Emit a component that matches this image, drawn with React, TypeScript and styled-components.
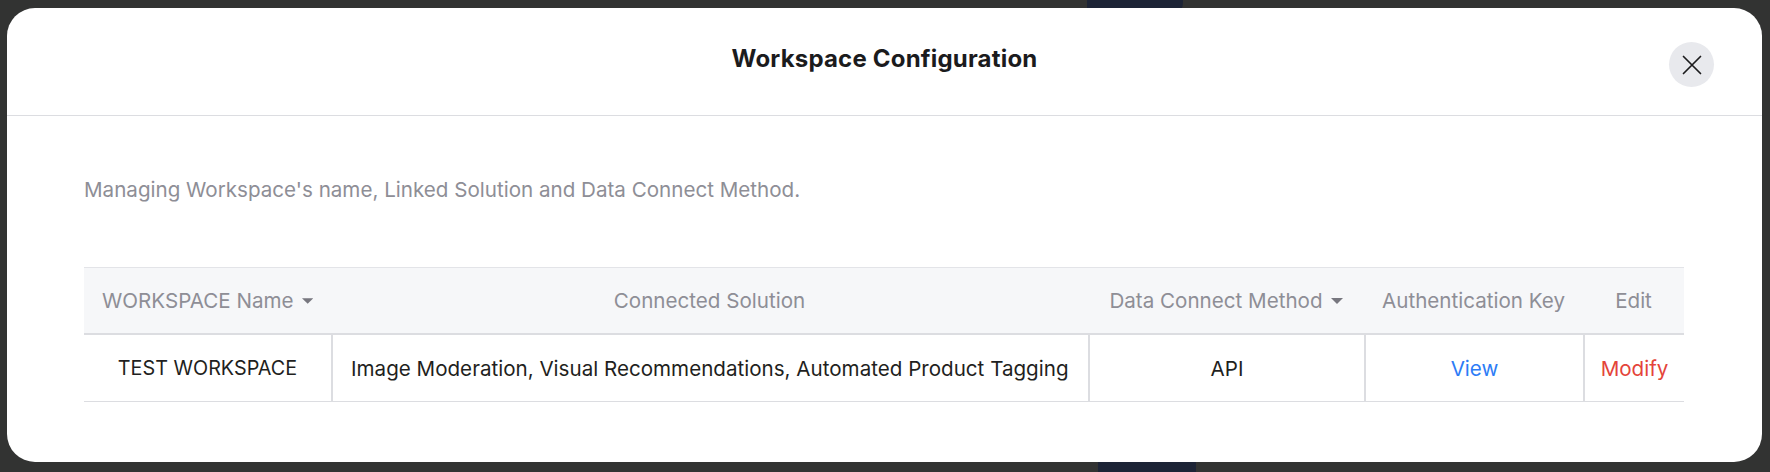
import styled, { createGlobalStyle } from "styled-components";

const GlobalStyle = createGlobalStyle`
  html, body {
    margin: 0;
    padding: 0;
    background: #323332;
  }
  * {
    box-sizing: border-box;
  }
`;

const Backdrop = styled.div`
  position: relative;
  width: 1770px;
  height: 472px;
  overflow: hidden;
  background: #323332;
  padding: 8px 0 0 7px;
  font-family: "Inter", "Noto Sans", sans-serif;
`;

// bits of the page behind the overlay
const BehindShape = styled.div<{ $top?: boolean }>`
  position: absolute;
  background: #1d2436;
  ${(p) =>
    p.$top
      ? `left: 1087px; top: -40px; width: 96px; height: 60px; border-radius: 0 0 18px 0;`
      : `left: 1098px; top: 452px; width: 98px; height: 60px; border-radius: 0 0 40px 40px;`}
`;

const Modal = styled.div`
  position: relative;
  width: 1755px;
  height: 454px;
  background: #ffffff;
  border-radius: 28px;
  display: flex;
  flex-direction: column;
`;

const Header = styled.header`
  height: 108px;
  flex-shrink: 0;
  display: flex;
  align-items: center;
  justify-content: center;
  border-bottom: 1px solid #dcdde1;
  padding-bottom: 6px;
  position: relative;
`;

const Title = styled.h1`
  margin: 0;
  font-size: 24px;
  font-weight: 700;
  color: #1b1b1d;
  letter-spacing: 0.2px;
`;

const CloseButton = styled.button`
  position: absolute;
  right: 48px;
  top: 34px;
  width: 45px;
  height: 45px;
  border-radius: 50%;
  border: none;
  background: #e8e9ed;
  display: flex;
  align-items: center;
  justify-content: center;
  padding: 0;
  cursor: pointer;
`;

const Body = styled.div`
  padding: 0 78px 0 77px;
  display: flex;
  flex-direction: column;
`;

const Description = styled.p`
  margin: 62px 0 0;
  height: 24px;
  line-height: 24px;
  font-size: 20.6px;
  color: #8e8e96;
`;

const Table = styled.div`
  margin-top: 65px;
  display: grid;
  grid-template-columns: 247px 757px 276px 219px 101px;
  border-top: 1px solid #e3e4e8;
`;

const HeadCell = styled.div<{ $left?: boolean }>`
  height: 67px;
  background: #f6f7f9;
  border-bottom: 2px solid #dcdde1;
  display: flex;
  align-items: center;
  justify-content: ${(p) => (p.$left ? "flex-start" : "center")};
  padding: 0 18px;
  gap: 8px;
  font-size: 20.6px;
  color: #8e8e96;
  white-space: nowrap;
`;

const Cell = styled.div<{ $left?: boolean; $first?: boolean; $tone?: "link" | "danger" }>`
  height: 67px;
  border-bottom: 1px solid #dcdde1;
  border-left: ${(p) => (p.$first ? "none" : "2px solid #dcdde1")};
  display: flex;
  align-items: center;
  justify-content: ${(p) => (p.$left ? "flex-start" : "center")};
  padding: 0 18px;
  font-size: 20.6px;
  white-space: nowrap;
  color: ${(p) =>
    p.$tone === "link" ? "#2d7cf6" : p.$tone === "danger" ? "#e4443a" : "#1f1f21"};
  cursor: ${(p) => (p.$tone ? "pointer" : "default")};
`;

const FirstCell = styled(Cell)`
  font-size: 19.8px;
`;

const SortArrow = () => (
  <svg width="12" height="6" viewBox="0 0 12 6">
    <path d="M0 0h12L6 6z" fill="#77777f" />
  </svg>
);

const CloseIcon = () => (
  <svg width="20" height="20" viewBox="0 0 20 20">
    <path d="M1.5 1.5l17 17M18.5 1.5l-17 17" stroke="#1b1b1d" strokeWidth="1.7" strokeLinecap="round" />
  </svg>
);

const columns = [
  { label: "WORKSPACE Name", sort: true, left: true },
  { label: "Connected Solution" },
  { label: "Data Connect Method", sort: true },
  { label: "Authentication Key" },
  { label: "Edit" },
];

export default function App() {
  return (
    <>
      <GlobalStyle />
      <Backdrop>
        <BehindShape $top />
        <BehindShape />
        <Modal>
          <Header>
            <Title>Workspace Configuration</Title>
            <CloseButton aria-label="Close">
              <CloseIcon />
            </CloseButton>
          </Header>
          <Body>
            <Description>
              Managing Workspace's name, Linked Solution and Data Connect Method.
            </Description>
            <Table>
              {columns.map((c) => (
                <HeadCell key={c.label} $left={c.left}>
                  {c.label}
                  {c.sort && <SortArrow />}
                </HeadCell>
              ))}
              <FirstCell $first>TEST WORKSPACE</FirstCell>
              <Cell $left>Image Moderation, Visual Recommendations, Automated Product Tagging</Cell>
              <Cell>API</Cell>
              <Cell $tone="link">View</Cell>
              <Cell $tone="danger">Modify</Cell>
            </Table>
          </Body>
        </Modal>
      </Backdrop>
    </>
  );
}
